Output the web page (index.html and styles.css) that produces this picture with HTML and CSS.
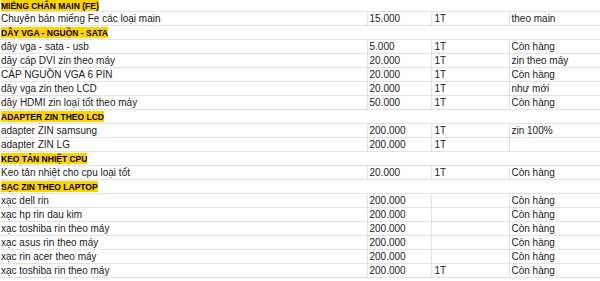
FILE: index.html
```html
<!DOCTYPE html>
<html lang="vi">
<head>
<meta charset="utf-8">
<link rel="stylesheet" href="styles.css">
</head>
<body>
<table class="sheet">
<colgroup><col class="c1"><col class="c2"><col class="c3"><col class="c4"></colgroup>
<tbody>
<tr class="first"><td class="h" colspan="4"><span class="hl">MIẾNG CHÂN MAIN (FE)</span></td></tr>
<tr><td>Chuyên bán miếng Fe các loại main</td><td>15.000</td><td class="q">1T</td><td>theo main</td></tr>
<tr><td class="h" colspan="4"><span class="hl">DÂY VGA - NGUỒN - SATA</span></td></tr>
<tr><td>dây vga - sata - usb</td><td>5.000</td><td class="q">1T</td><td>Còn hàng</td></tr>
<tr><td>dây cáp DVI zin theo máy</td><td>20.000</td><td class="q">1T</td><td>zin theo máy</td></tr>
<tr><td>CÁP NGUỒN VGA 6 PIN</td><td>20.000</td><td class="q">1T</td><td>Còn hàng</td></tr>
<tr><td>dây vga zin theo LCD</td><td>20.000</td><td class="q">1T</td><td>như mới</td></tr>
<tr><td>dây HDMI zin loại tốt theo máy</td><td>50.000</td><td class="q">1T</td><td>Còn hàng</td></tr>
<tr><td class="h" colspan="4"><span class="hl">ADAPTER ZIN THEO LCD</span></td></tr>
<tr><td>adapter ZIN samsung</td><td>200.000</td><td class="q">1T</td><td>zin 100%</td></tr>
<tr><td>adapter ZIN LG</td><td>200.000</td><td class="q">1T</td><td></td></tr>
<tr><td class="h" colspan="4"><span class="hl">KEO TẢN NHIỆT CPU</span></td></tr>
<tr><td>Keo tản nhiệt cho cpu loại tốt</td><td>20.000</td><td class="q">1T</td><td>Còn hàng</td></tr>
<tr><td class="h" colspan="4"><span class="hl">SẠC ZIN THEO LAPTOP</span></td></tr>
<tr><td>xạc dell rin</td><td>200.000</td><td class="q"></td><td>Còn hàng</td></tr>
<tr><td>xạc hp rin dau kim</td><td>200.000</td><td class="q"></td><td>Còn hàng</td></tr>
<tr><td>xạc toshiba rin theo máy</td><td>200.000</td><td class="q"></td><td>Còn hàng</td></tr>
<tr><td>xạc asus rin theo máy</td><td>200.000</td><td class="q"></td><td>Còn hàng</td></tr>
<tr><td>xạc rin acer theo máy</td><td>200.000</td><td class="q"></td><td>Còn hàng</td></tr>
<tr><td>xạc toshiba rin theo máy</td><td>200.000</td><td class="q">1T</td><td>Còn hàng</td></tr>
</tbody>
</table>
</body>
</html>
```

FILE: styles.css
```css
html, body {
  margin: 0;
  padding: 0;
  background: #ffffff;
}
body {
  font-family: "Liberation Sans", Arial, sans-serif;
  color: #222222;
  overflow: hidden;
}
.sheet {
  border-collapse: collapse;
  table-layout: fixed;
  width: 600px;
  border-bottom: 1px solid #d8d8d8;
}
.c1 { width: 367px; }
.c2 { width: 64px; }
.c3 { width: 78px; }
.c4 { width: 91px; }
.sheet td {
  height: 13px;
  padding: 0 2px;
  font-size: 10px;
  line-height: 13px;
  white-space: nowrap;
  overflow: hidden;
  vertical-align: middle;
  border: 1px solid #e2e2e2;
  border-top: none;
}
.sheet td.h {
  font-size: 8.5px;
  line-height: 13px;
}
.sheet .first td {
  height: 11px;
  line-height: 11px;
  vertical-align: top;
}
.sheet td:first-child {
  padding-left: 1px;
  border-left: none;
}
.sheet td:last-child {
  border-right: none;
}
.sheet td.q {
  padding-left: 3px;
}
.hl {
  background: #ffd200;
  color: #000000;
  font-weight: bold;
  padding: 0.5px 0;
}
```
